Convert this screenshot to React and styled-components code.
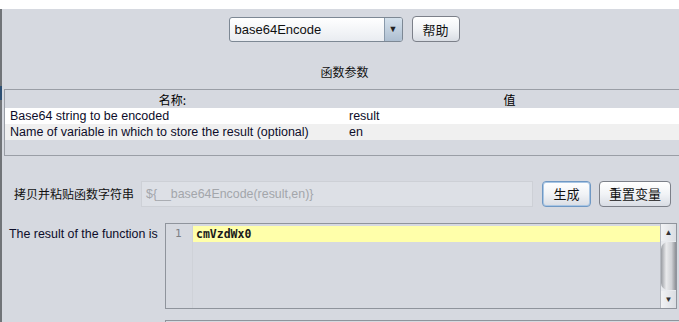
import styled, { createGlobalStyle } from 'styled-components'

const GlobalStyle = createGlobalStyle`
  html, body {
    margin: 0;
    padding: 0;
    background: #ffffff;
    overflow: hidden;
  }
  body {
    font-family: "Liberation Sans", Arial, sans-serif;
    font-size: 12px;
  }
`

const cjk = `"Noto Sans CJK SC", "Liberation Sans", sans-serif`

const Window = styled.div`
  width: 679px;
  height: 322px;
  display: flex;
  flex-direction: column;
  overflow: hidden;
`

const TopStrip = styled.div`
  height: 9px;
  background: #ffffff;
  flex-shrink: 0;
`

const Panel = styled.div`
  flex: 1;
  background: #d6d9e0;
  border-left: 2px solid #717478;
  display: flex;
  flex-direction: column;
  position: relative;
`

const EdgeMark = styled.div`
  position: absolute;
  left: -2px;
  top: 77px;
  width: 2px;
  height: 14px;
  background: #2d4f73;
`

const Toolbar = styled.div`
  display: flex;
  justify-content: center;
  align-items: center;
  gap: 9px;
  height: 26px;
  margin-top: 7px;
  padding-left: 7px;
`

const Combo = styled.div`
  width: 172px;
  height: 23px;
  border: 1px solid #7d8894;
  border-radius: 3px;
  background: linear-gradient(#ffffff, #e9ecf1);
  display: flex;
  align-items: stretch;
  overflow: hidden;
`

const ComboText = styled.div`
  flex: 1;
  display: flex;
  align-items: center;
  padding-left: 5px;
  font-size: 13px;
  color: #101010;
`

const ComboArrow = styled.div`
  width: 17px;
  border-left: 1px solid #8a9aab;
  background: linear-gradient(#d5e1ec, #aebfd1);
  display: flex;
  align-items: center;
  justify-content: center;
  font-size: 9px;
  color: #222;
`

const Button = styled.button`
  height: ${p => p.$h || 26}px;
  width: ${p => p.$w}px;
  padding: 0;
  border: 1px solid ${p => (p.$focus ? '#6f98c4' : '#7c8089')};
  box-shadow: ${p => (p.$focus ? 'inset 0 0 0 1px #a9c6e4' : 'none')};
  border-radius: 4px;
  background: linear-gradient(#ffffff 0%, #f1f3f6 50%, #d9dde4 100%);
  font-family: ${cjk};
  font-size: 13px;
  color: #111;
  display: flex;
  align-items: center;
  justify-content: center;
  flex-shrink: 0;
`

const SectionTitle = styled.div`
  margin-top: 21px;
  height: 17px;
  text-align: center;
  padding-left: 8px;
  font-family: ${cjk};
  font-size: 12px;
  color: #111;
`

const TableBox = styled.div`
  margin-top: 9px;
  margin-left: 2px;
  height: 65px;
  border-top: 1px solid #9a9ea6;
  border-left: 1px solid #9a9ea6;
  border-bottom: 1px solid #9a9ea6;
`

const Row = styled.div`
  display: grid;
  grid-template-columns: 335px 1fr;
  height: ${p => (p.$head ? 18 : 16)}px;
  background: ${p => p.$bg || 'transparent'};
  align-items: center;
`

const HeadCell = styled.div`
  text-align: center;
  font-family: ${cjk};
  font-size: 12px;
  color: #000;
`

const Cell = styled.div`
  padding-left: ${p => p.$pl}px;
  font-size: 12.5px;
  color: #0d0d2a;
  white-space: nowrap;
`

const FieldRow = styled.div`
  display: flex;
  align-items: center;
  height: 27px;
  margin-top: 24px;
  padding-left: 12px;
`

const FieldLabel = styled.div`
  width: 127px;
  font-family: ${cjk};
  font-size: 12px;
  color: #111;
`

const FuncField = styled.div`
  width: 386px;
  height: 24px;
  border: 1px solid #cdd0d6;
  background: #dde0e6;
  color: #a3a6ab;
  font-size: 12.4px;
  display: flex;
  align-items: center;
  padding-left: 4px;
  box-sizing: content-box;
  margin-right: 9px;
`

const ButtonGroup = styled.div`
  display: flex;
  gap: 8px;
`

const ResultRow = styled.div`
  display: flex;
  margin-top: 16px;
  padding-left: 7px;
`

const ResultLabel = styled.div`
  width: 156px;
  padding-top: 4px;
  font-size: 12.4px;
  color: #0d0d2a;
  white-space: nowrap;
`

const Editor = styled.div`
  width: 510px;
  height: 84px;
  border: 1px solid #8f949c;
  display: flex;
  background: #d6d9e0;
`

const Gutter = styled.div`
  width: 27px;
  border-right: 1px solid #cfd2d8;
  padding-top: 3px;
  padding-left: 9px;
  box-sizing: border-box;
  font-family: "DejaVu Sans Mono", monospace;
  font-size: 11px;
  color: #7d8086;
`

const Code = styled.div`
  flex: 1;
  padding-top: 2px;
`

const CodeLine = styled.div`
  height: 16px;
  background: ${p => (p.$active ? '#ffffaa' : 'transparent')};
  font-family: "DejaVu Sans Mono", monospace;
  font-size: 11.5px;
  font-weight: 600;
  color: #1a1a1a;
  padding-left: 3px;
  line-height: 16px;
`

const Scrollbar = styled.div`
  width: 15px;
  border-left: 1px solid #b6bac1;
  background: #e8eaee;
  display: flex;
  flex-direction: column;
`

const ScrollArrow = styled.div`
  height: 17px;
  display: flex;
  align-items: center;
  justify-content: center;
  font-size: 8px;
  color: #333;
  background: linear-gradient(90deg, #f2f3f5, #dadde2);
`

const ScrollTrack = styled.div`
  flex: 1;
  padding: 1px 0;
  display: flex;
`

const ScrollThumb = styled.div`
  flex: 1;
  border-radius: 7px 0 0 7px;
  background: linear-gradient(90deg, #9a9da3 0%, #e9eaec 35%, #d0d2d6 70%, #8c8f95 100%);
`

const NextBox = styled.div`
  margin-top: 11px;
  margin-left: 163px;
  height: 20px;
  border-top: 1px solid #8f949c;
  border-left: 1px solid #8f949c;
`

export default function App() {
  return (
    <Window>
      <GlobalStyle />
      <TopStrip />
      <Panel>
        <EdgeMark />
        <Toolbar>
          <Combo>
            <ComboText>base64Encode</ComboText>
            <ComboArrow>▼</ComboArrow>
          </Combo>
          <Button $w={48} $h={26}>帮助</Button>
        </Toolbar>
        <SectionTitle>函数参数</SectionTitle>
        <TableBox>
          <Row $head>
            <HeadCell>名称:</HeadCell>
            <HeadCell>值</HeadCell>
          </Row>
          <Row $bg="#ffffff">
            <Cell $pl={5}>Base64 string to be encoded</Cell>
            <Cell $pl={9}>result</Cell>
          </Row>
          <Row $bg="#f0f0f0">
            <Cell $pl={5}>Name of variable in which to store the result (optional)</Cell>
            <Cell $pl={9}>en</Cell>
          </Row>
        </TableBox>
        <FieldRow>
          <FieldLabel>拷贝并粘贴函数字符串</FieldLabel>
          <FuncField>{'${__base64Encode(result,en)}'}</FuncField>
          <ButtonGroup>
            <Button $w={49} $focus>生成</Button>
            <Button $w={72}>重置变量</Button>
          </ButtonGroup>
        </FieldRow>
        <ResultRow>
          <ResultLabel>The result of the function is</ResultLabel>
          <Editor>
            <Gutter>1</Gutter>
            <Code>
              <CodeLine $active>cmVzdWx0</CodeLine>
            </Code>
            <Scrollbar>
              <ScrollArrow>▲</ScrollArrow>
              <ScrollTrack>
                <ScrollThumb />
              </ScrollTrack>
              <ScrollArrow>▼</ScrollArrow>
            </Scrollbar>
          </Editor>
        </ResultRow>
        <NextBox />
      </Panel>
    </Window>
  )
}
